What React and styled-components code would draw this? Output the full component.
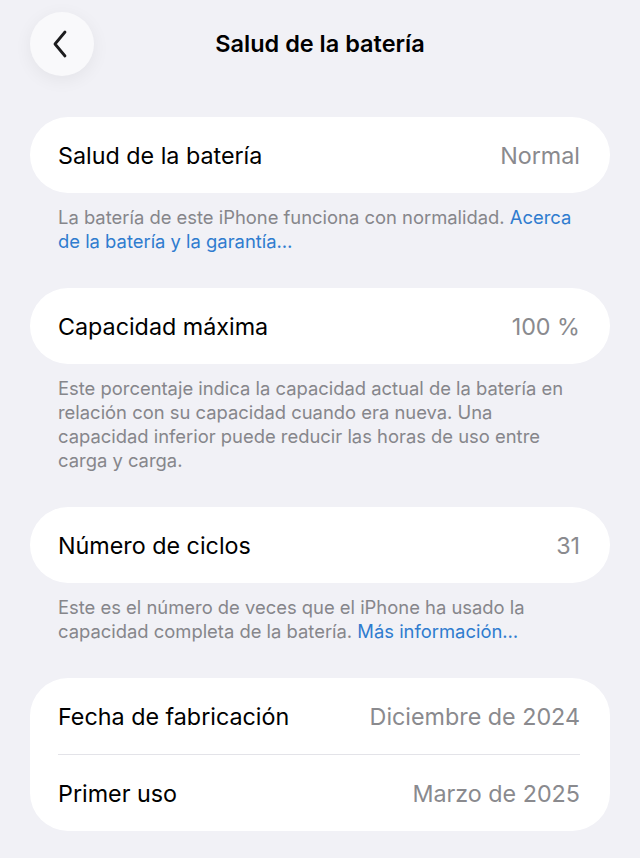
import React from 'react'
import { styled, createGlobalStyle } from 'styled-components'

const GlobalStyle = createGlobalStyle`
  html, body {
    margin: 0;
    padding: 0;
    background: #f1f1f6;
  }
  body {
    font-family: Inter, "Noto Sans", "Liberation Sans", sans-serif;
    -webkit-font-smoothing: antialiased;
  }
`

const ChevronLeft = () => (
  <svg width="16" height="28" viewBox="0 0 16 28" fill="none">
    <path d="M13 2 L3 14 L13 26" stroke="#1c1c1e" strokeWidth="2.8" strokeLinecap="round" strokeLinejoin="round" />
  </svg>
)

const sections = [
  {
    rows: [{ label: 'Salud de la batería', value: 'Normal' }],
    note: ['La batería de este iPhone funciona con normalidad. '],
    link: ['Acerca', 'de la batería y la garantía…'],
  },
  {
    rows: [{ label: 'Capacidad máxima', value: '100 %' }],
    note: [
      'Este porcentaje indica la capacidad actual de la batería en',
      'relación con su capacidad cuando era nueva. Una',
      'capacidad inferior puede reducir las horas de uso entre',
      'carga y carga.',
    ],
  },
  {
    rows: [{ label: 'Número de ciclos', value: '31' }],
    note: [
      'Este es el número de veces que el iPhone ha usado la',
      'capacidad completa de la batería. ',
    ],
    link: ['Más información…'],
  },
  {
    rows: [
      { label: 'Fecha de fabricación', value: 'Diciembre de 2024' },
      { label: 'Primer uso', value: 'Marzo de 2025' },
    ],
  },
]

const Note = ({ note, link }) => {
  // first section: link starts on the first line and wraps to the second
  if (link && link.length === 2) {
    return (
      <Footer>
        {note[0]}<Link>{link[0]}</Link>
        <br />
        <Link>{link[1]}</Link>
      </Footer>
    )
  }
  return (
    <Footer>
      {note.map((line, i) => (
        <React.Fragment key={i}>
          {line}
          {i === note.length - 1 && link ? <Link>{link[0]}</Link> : null}
          {i < note.length - 1 ? <br /> : null}
        </React.Fragment>
      ))}
    </Footer>
  )
}

const App = () => {
  return (
    <>
      <GlobalStyle />
      <Screen>
        <NavBar>
          <BackButton aria-label="Atrás">
            <ChevronLeft />
          </BackButton>
          <Title>Salud de la batería</Title>
        </NavBar>
        {sections.map((section, i) => (
          <Section key={i}>
            <Card>
              {section.rows.map((row, j) => (
                <Row key={row.label} $divided={j > 0}>
                  <Label>{row.label}</Label>
                  <Value>{row.value}</Value>
                </Row>
              ))}
            </Card>
            {section.note ? <Note note={section.note} link={section.link} /> : null}
          </Section>
        ))}
      </Screen>
    </>
  )
}

const Screen = styled.div`
  width: 640px;
  min-height: 858px;
  box-sizing: border-box;
  padding: 0 30px;
  background: #f1f1f6;
`

const NavBar = styled.div`
  position: relative;
  height: 117px;
  display: flex;
  align-items: flex-start;
  justify-content: center;
`

const BackButton = styled.button`
  position: absolute;
  left: 0;
  top: 12px;
  width: 64px;
  height: 64px;
  border: none;
  border-radius: 50%;
  background: #f9f9fb;
  box-shadow: 0 4px 18px rgba(0, 0, 0, 0.06);
  display: flex;
  align-items: center;
  justify-content: center;
  padding: 0 4px 0 0;
  cursor: pointer;
`

const Title = styled.h1`
  margin: 29px 0 0;
  font-size: 23.5px;
  line-height: 30px;
  font-weight: 600;
  color: #000;
`

const Section = styled.div`
  display: flex;
  flex-direction: column;
  margin-bottom: 35px;
`

const Card = styled.div`
  background: #ffffff;
  border-radius: 38px;
  padding: 0 30px 0 28px;
`

const Row = styled.div`
  height: 76px;
  display: flex;
  align-items: center;
  justify-content: space-between;
  border-top: ${p => (p.$divided ? '1px solid #e3e3e8' : 'none')};
`

const Label = styled.span`
  font-size: 23.3px;
  color: #000;
`

const Value = styled.span`
  font-size: 23.3px;
  color: #8a8a8e;
`

const Footer = styled.p`
  margin: 12px 0 0;
  padding: 0 28px;
  font-size: 18.4px;
  line-height: 24px;
  color: #86868b;
  white-space: nowrap;
`

const Link = styled.span`
  color: #2f7ccf;
`

export default App
